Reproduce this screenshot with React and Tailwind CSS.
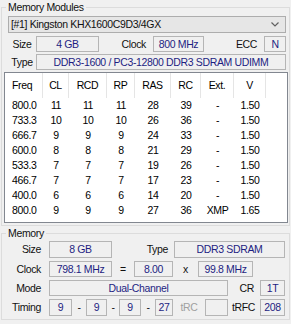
import React from "react";

const timings = [
  ["800.0", "11", "11", "11", "28", "39", "-", "1.50"],
  ["733.3", "10", "10", "10", "26", "36", "-", "1.50"],
  ["666.7", "9", "9", "9", "24", "33", "-", "1.50"],
  ["600.0", "8", "8", "8", "21", "29", "-", "1.50"],
  ["533.3", "7", "7", "7", "19", "26", "-", "1.50"],
  ["466.7", "7", "7", "7", "17", "23", "-", "1.50"],
  ["400.0", "6", "6", "6", "14", "20", "-", "1.50"],
  ["800.0", "9", "9", "9", "27", "36", "XMP", "1.65"],
];

const cols = [
  { label: "Freq", w: "w-[38px]", align: "text-left pl-[7px]" },
  { label: "CL", w: "w-[26px]", align: "text-center" },
  { label: "RCD", w: "w-[38px]", align: "text-center" },
  { label: "RP", w: "w-[28px]", align: "text-center" },
  { label: "RAS", w: "w-[36px]", align: "text-center" },
  { label: "RC", w: "w-[30px]", align: "text-center" },
  { label: "Ext.", w: "w-[33px]", align: "text-center" },
  { label: "V", w: "w-[32px]", align: "text-center" },
];

function Box({ className = "", children }) {
  return (
    <div
      className={`h-full flex items-center justify-center border border-[#b5b5b5] bg-[#f0f0f0] text-[#1e1e82] ${className}`}
    >
      {children}
    </div>
  );
}

function App() {
  return (
    <div className="w-[291px] h-[324px] overflow-hidden bg-[#f0f0f0] pt-[1px] px-[1px] font-['Liberation_Sans',Arial,sans-serif] text-[10.5px] leading-[13px] tracking-[-0.35px] text-[#111]">
      {/* Memory Modules */}
      <fieldset className="border border-[#dcdcdc] pb-[2px]">
        <legend className="ml-[4px] px-[2px]">Memory Modules</legend>

        <div className="ml-[6px] mt-[2px] w-[278px] h-[17px] flex items-center justify-between border border-[#adadad] bg-[#e6e6e6] pl-[2px] pr-[6px]">
          <span>[#1] Kingston KHX1600C9D3/4GX</span>
          <svg width="8" height="5" viewBox="0 0 8 5">
            <path d="M0.5 0.5 L4 4 L7.5 0.5" fill="none" stroke="#606060" strokeWidth="1.2" />
          </svg>
        </div>

        <div className="mt-[3px] h-[16px] flex items-center">
          <div className="ml-[6px] w-[28px] text-center">Size</div>
          <Box className="w-[63px]">4 GB</Box>
          <div className="w-[54px] text-right pr-[7px]">Clock</div>
          <Box className="w-[51px]">800 MHz</Box>
          <div className="w-[60px] text-right pr-[7px]">ECC</div>
          <Box className="w-[22px]">N</Box>
        </div>

        <div className="mt-[2px] h-[16px] flex items-center">
          <div className="ml-[6px] w-[28px] text-center">Type</div>
          <Box className="w-[250px]">DDR3-1600 / PC3-12800 DDR3 SDRAM UDIMM</Box>
        </div>

        {/* SPD timings table */}
        <div className="ml-[2px] mt-[2px] w-[284px] h-[151px] border border-[#828790] bg-white text-black">
          <div className="flex h-[25px]">
            {cols.map((c) => (
              <div
                key={c.label}
                className={`${c.w} ${c.align} flex-none flex items-center border-r border-[#e5e5e5] ${c.align === "text-center" ? "justify-center" : ""}`}
              >
                {c.label}
              </div>
            ))}
          </div>
          {timings.map((row, i) => (
            <div key={i} className="flex h-[15px] items-center">
              {row.map((v, j) => (
                <div key={j} className={`${cols[j].w} ${cols[j].align} flex-none`}>
                  {v}
                </div>
              ))}
            </div>
          ))}
        </div>
      </fieldset>

      {/* Memory */}
      <fieldset className="mt-[1px] border border-[#dcdcdc] pb-[3px]">
        <legend className="ml-[4px] px-[2px]">Memory</legend>

        <div className="mt-[1px] h-[17px] flex items-center">
          <div className="w-[39px] text-right mr-[8px]">Size</div>
          <Box className="w-[63px]">8 GB</Box>
          <div className="w-[62px] text-right pr-[6px]">Type</div>
          <Box className="w-[111px]">DDR3 SDRAM</Box>
        </div>

        <div className="mt-[3px] h-[16px] flex items-center">
          <div className="w-[39px] text-right mr-[8px]">Clock</div>
          <Box className="w-[63px]">798.1 MHz</Box>
          <div className="w-[22px] text-center">=</div>
          <Box className="w-[39px]">8.00</Box>
          <div className="w-[25px] text-center">x</div>
          <Box className="w-[55px]">99.8 MHz</Box>
        </div>

        <div className="mt-[3px] h-[16px] flex items-center">
          <div className="w-[39px] text-right mr-[8px]">Mode</div>
          <Box className="w-[179px]">Dual-Channel</Box>
          <div className="w-[32px] text-right pr-[6px]">CR</div>
          <Box className="w-[25px]">1T</Box>
        </div>

        <div className="mt-[3px] h-[17px] flex items-center">
          <div className="w-[39px] text-right mr-[8px]">Timing</div>
          <Box className="w-[23px]">9</Box>
          <div className="w-[14px] text-center">-</div>
          <Box className="w-[21px]">9</Box>
          <div className="w-[12px] text-center">-</div>
          <Box className="w-[22px]">9</Box>
          <div className="w-[14px] text-center">-</div>
          <Box className="w-[18px]">27</Box>
          <div className="w-[32px] text-center text-[#a0a0a0]">tRC</div>
          <Box className="w-[23px]" />
          <div className="w-[32px] text-right pr-[5px]">tRFC</div>
          <Box className="w-[25px]">208</Box>
        </div>
      </fieldset>
    </div>
  );
}

export default App;
